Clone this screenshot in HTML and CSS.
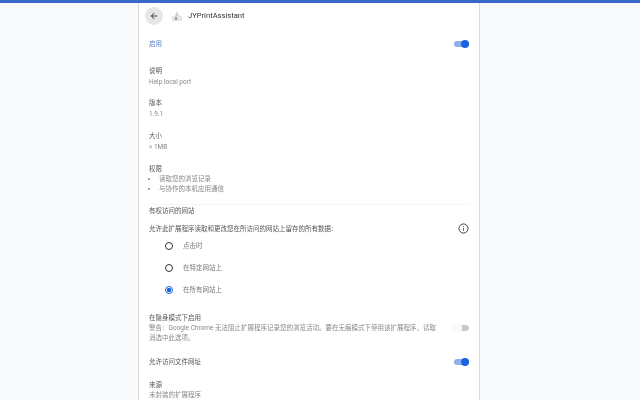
FILE: index.html
```html
<!DOCTYPE html>
<html lang="zh">
<head>
<meta charset="utf-8">
<title>JYPrintAssistant</title>
<link rel="stylesheet" href="styles.css">
</head>
<body>
<div class="topbar"></div>
<main class="card">
  <header class="head">
    <button class="back" aria-label="back">
      <svg width="10" height="10" viewBox="0 0 24 24"><path d="M20 11H7.83l5.59-5.59L12 4l-8 8 8 8 1.41-1.41L7.83 13H20z" fill="#444"/></svg>
    </button>
    <svg class="ext" width="12" height="12" viewBox="0 0 12 12"><rect x="1" y="6" width="10" height="5" fill="#e4e4e4"/><path d="M6 1 8 6H4z" fill="#d0d0d0"/><rect x="4" y="7" width="2" height="3" fill="#999"/></svg>
    <span class="title">JYPrintAssistant</span>
  </header>
  <section class="row r-enable"><span class="blue">启用</span><span class="toggle on"></span></section>
  <section class="block b-desc"><div class="lab">说明</div><div class="val">Help local port</div></section>
  <section class="block b-ver"><div class="lab">版本</div><div class="val">1.9.1</div></section>
  <section class="block b-size"><div class="lab">大小</div><div class="val">&lt; 1MB</div></section>
  <section class="block b-perm"><div class="lab">权限</div>
    <ul class="list"><li>读取您的浏览记录</li><li>与协作的本机应用通信</li></ul>
  </section>
  <div class="rule"></div>
  <section class="block b-site"><div class="lab">有权访问的网站</div></section>
  <section class="row r-q"><span class="lab">允许此扩展程序读取和更改您在所访问的网站上留存的所有数据：</span>
    <svg width="11" height="11" viewBox="0 0 12 12"><circle cx="6" cy="6" r="5" fill="none" stroke="#333" stroke-width="1"/><path d="M6 5.4v3.2M6 3.4v1" stroke="#555" stroke-width="1"/></svg>
  </section>
  <section class="radios">
    <div class="radio"><i class="dot"></i><span>点击时</span></div>
    <div class="radio"><i class="dot"></i><span>在特定网站上</span></div>
    <div class="radio"><i class="dot sel"></i><span>在所有网站上</span></div>
  </section>
  <section class="row r-inc">
    <div class="inc"><div class="lab">在隐身模式下启用</div><div class="warn">警告：Google Chrome 无法阻止扩展程序记录您的浏览活动。要在无痕模式下停用该扩展程序，请取消选中此选项。</div></div>
    <span class="toggle off"></span>
  </section>
  <section class="row r-file"><span class="lab">允许访问文件网址</span><span class="toggle on"></span></section>
  <section class="block b-src"><div class="lab">来源</div><div class="warn">未封装的扩展程序</div></section>
</main>
</body>
</html>
```
FILE: styles.css
```css
* { box-sizing: border-box; }
html, body { margin: 0; height: 400px; overflow: hidden; }
body { background: #f8f9fa; font: 6.5px/10px Roboto, "Noto Sans CJK SC", sans-serif; color: #5f6368; }
.topbar { height: 3px; background: #3b66cc; }
.card { width: 342px; height: 397px; margin-left: 138px; background: #fff; border-left: 1px solid #dcdcdc; border-right: 1px solid #dcdcdc; padding: 0 10px; overflow: hidden; filter: blur(0.3px); }
.head { display: flex; align-items: center; height: 26px; margin-left: -4px; }
.back { width: 18px; height: 18px; border: 0; border-radius: 50%; background: #e6e6e6; display: flex; align-items: center; justify-content: center; padding: 0; margin-right: 8px; }
.ext { margin-right: 5px; }
.title { color: #333; font-size: 7.6px; }
.row { display: flex; align-items: center; justify-content: space-between; }
.lab { color: #555; }
.val { color: #888; margin-top: 1px; }
.warn { color: #888; }
.blue { color: #5b7fc7; }
.r-enable { margin-top: 10px; height: 10px; }
.block { display: block; }
.b-desc { margin-top: 17px; }
.b-ver { margin-top: 11px; }
.b-size { margin-top: 12px; }
.b-perm { margin-top: 12px; }
.list { margin: 0; padding: 0 0 0 10px; color: #888; }
.rule { height: 1px; background: #f6f6f6; margin: 10px 0 0; }
.b-site { margin-top: 1px; }
.r-q { margin-top: 7px; height: 11px; padding-right: 0; }
.radios { display: flex; flex-direction: column; margin-top: 1px; padding-left: 16px; }
.radio { display: flex; align-items: center; height: 22px; color: #777; }
.dot { width: 8px; height: 8px; border: 1.2px solid #333; border-radius: 50%; margin-right: 10px; display: block; }
.dot.sel { border-color: #1a63e0; background: radial-gradient(circle, #1a63e0 0 2px, #fff 2.4px); }
.r-inc { margin-top: 12px; }
.inc { width: 290px; }
.r-file { margin-top: 14px; height: 10px; }
.b-src { margin-top: 13px; }
.toggle { position: relative; width: 15px; height: 6px; border-radius: 3px; display: block; }
.toggle::after { content: ""; position: absolute; top: -1px; width: 8px; height: 8px; border-radius: 50%; }
.toggle.on { background: #8fb0ee; }
.toggle.on::after { right: 0; background: #1a63e0; }
.toggle.off { background: #c8c8c8; }
.toggle.off::after { left: 0; background: #fafafa; }
```
